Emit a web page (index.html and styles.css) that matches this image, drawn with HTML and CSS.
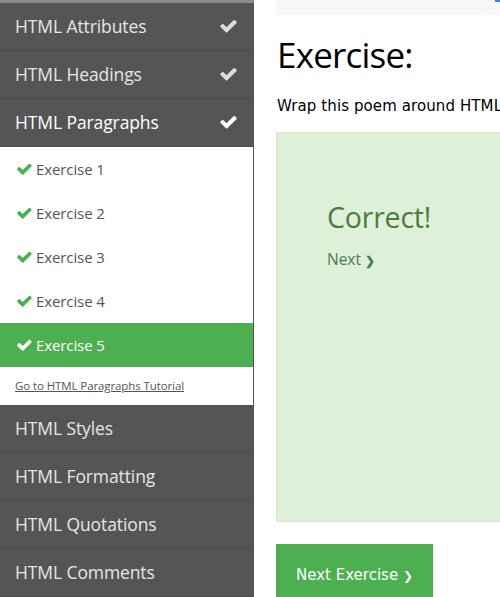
FILE: index.html
```html
<!DOCTYPE html>
<html>
<head>
<meta charset="utf-8">
<link rel="stylesheet" href="styles.css">
</head>
<body>
<svg width="0" height="0" class="defs">
  <defs>
    <symbol id="chk" viewBox="0 300 1700 1200">
      <path d="M1671 566q0 40-28 68l-724 724-136 136q-28 28-68 28t-68-28l-136-136-362-362q-28-28-28-68t28-68l136-136q28-28 68-28t68 28l294 295 656-657q28-28 68-28t68 28l136 136q28 28 28 68z"/>
    </symbol>
  </defs>
</svg>
<div class="page">
  <nav class="sidebar">
    <div class="topbar"></div>
    <div class="item done">HTML Attributes<svg class="ico"><use href="#chk"/></svg></div>
    <div class="item done">HTML Headings<svg class="ico"><use href="#chk"/></svg></div>
    <div class="item done active">HTML Paragraphs<svg class="ico"><use href="#chk"/></svg></div>
    <div class="sub">
      <div class="ex"><svg class="gico"><use href="#chk"/></svg>Exercise 1</div>
      <div class="ex"><svg class="gico"><use href="#chk"/></svg>Exercise 2</div>
      <div class="ex"><svg class="gico"><use href="#chk"/></svg>Exercise 3</div>
      <div class="ex"><svg class="gico"><use href="#chk"/></svg>Exercise 4</div>
      <div class="ex current"><svg class="gico"><use href="#chk"/></svg>Exercise 5</div>
      <a class="tut" href="#">Go to HTML Paragraphs Tutorial</a>
    </div>
    <div class="item">HTML Styles</div>
    <div class="item">HTML Formatting</div>
    <div class="item">HTML Quotations</div>
    <div class="item">HTML Comments</div>
  </nav>
  <main class="main">
    <div class="topbox"><span class="blue"></span></div>
    <h1 class="title">Exercise:</h1>
    <p class="intro">Wrap this poem around HTML</p>
    <div class="result">
      <div class="correct">Correct!</div>
      <div class="next">Next <span class="arr">❯</span></div>
    </div>
    <div class="btnrow"><a class="btn" href="#">Next Exercise <span class="arr">❯</span></a></div>
  </main>
</div>
</body>
</html>
```

FILE: styles.css
```css
html, body {
  margin: 0;
  padding: 0;
  overflow: hidden;
  background: #fff;
}
.defs { position: absolute; }
.page {
  display: flex;
  width: 500px;
  height: 597px;
  overflow: hidden;
}
.sidebar {
  width: 254px;
  flex: 0 0 254px;
  background: #555;
  font-family: "Open Sans", "Noto Sans", sans-serif;
}
.topbar {
  height: 3px;
  background: #8a8a8a;
}
.item {
  box-sizing: border-box;
  height: 48px;
  border-bottom: 1px solid #4c4c4c;
  display: flex;
  align-items: center;
  justify-content: space-between;
  padding: 0 17px 1px 15px;
  font-size: 17.5px;
  color: #e6e6e6;
  letter-spacing: -0.1px;
}
.item.active { color: #fff; }
.ico {
  width: 18px;
  height: 14px;
  fill: #ddd;
}
.item.active .ico { fill: #fff; }
.sub {
  background: #fff;
  margin-right: 1px;
}
.ex {
  height: 44px;
  display: flex;
  align-items: center;
  padding-left: 16px;
  font-size: 15px;
  color: #555;
  letter-spacing: -0.1px;
}
.gico {
  width: 16px;
  height: 12px;
  fill: #4caf50;
  margin-right: 4px;
}
.ex.current {
  background: #4caf50;
  color: #fff;
}
.ex.current .gico { fill: #fff; }
.tut {
  display: block;
  height: 38px;
  line-height: 38px;
  padding-left: 15px;
  font-size: 11.5px;
  color: #555;
  text-decoration: underline;
  letter-spacing: -0.1px;
}
.main {
  flex: 1;
  padding-left: 22px;
  overflow: hidden;
  font-family: "DejaVu Sans", Verdana, sans-serif;
}
.topbox {
  height: 15px;
  width: 400px;
  background: #f8f8f8;
  position: relative;
}
.blue {
  position: absolute;
  left: 219px;
  top: 0;
  width: 8px;
  height: 2px;
  background: #3b7df0;
}
.title {
  margin: 18px 0 0 1px;
  font-family: "Open Sans", "Noto Sans", sans-serif;
  font-weight: 400;
  font-size: 35px;
  line-height: 44px;
  color: #000;
  letter-spacing: -0.8px;
}
.intro {
  margin: 18px 0 0 1px;
  font-size: 15px;
  line-height: 22px;
  white-space: nowrap;
  color: #000;
  letter-spacing: 0.1px;
}
.result {
  margin-top: 15px;
  width: 400px;
  height: 390px;
  background: #dff0d8;
  border: 1px solid #d2e8c8;
  padding: 65px 0 0 50px;
  box-sizing: border-box;
  font-family: "Open Sans", "Noto Sans", sans-serif;
  color: #4a7d3c;
}
.correct {
  font-size: 28.5px;
  line-height: 38px;
  letter-spacing: -0.2px;
}
.next {
  margin-top: 12px;
  font-size: 15.5px;
  color: #4c7d57;
}
.next .arr { font-size: 12px; font-weight: 700; }
.btnrow {
  margin-top: 22px;
}
.btn {
  display: inline-block;
  background: #4caf50;
  color: #fff;
  text-decoration: none;
  font-size: 15px;
  padding: 20px 20px 20px 20px;
  line-height: 22px;
}
.btn .arr { font-size: 12px; font-weight: 700; }
```
